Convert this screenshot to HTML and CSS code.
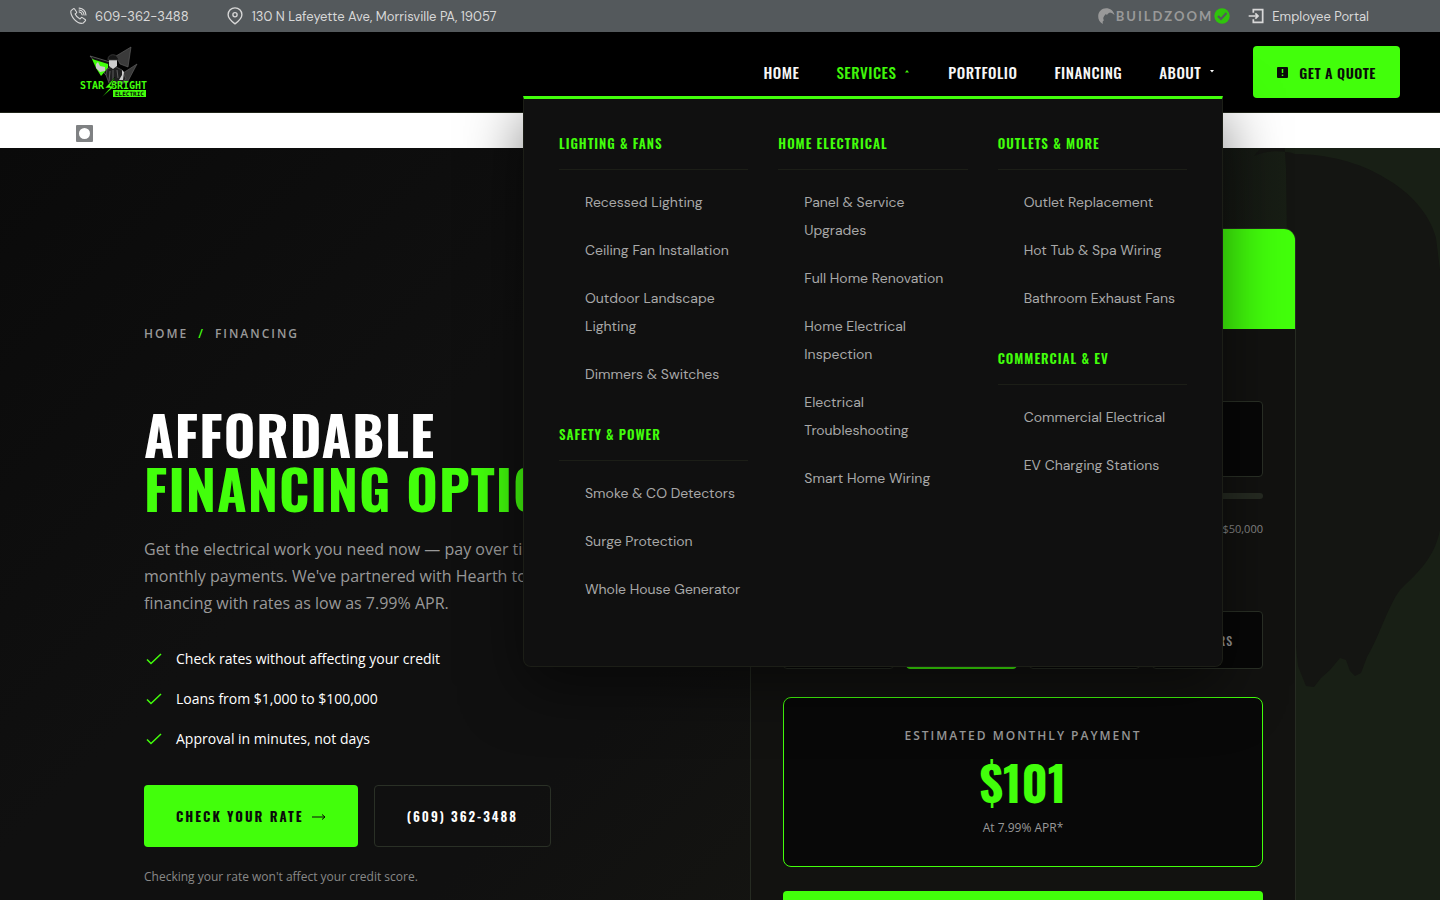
FILE: index.html
```
<!DOCTYPE html>
<html lang="en">
  <head>
    <meta charset="UTF-8" />
    <meta name="viewport" content="width=device-width, initial-scale=1.0" />
    <title>Financing | Star Bright Electric</title>
    <link rel="stylesheet" href="styles.css">
  </head>
  <body>
    <div class="topbar">
      <div class="topbar-group">
        <a class="topbar-link" href="tel:6093623488">
          <svg width="18" height="18" viewBox="0 0 24 24" fill="none" stroke="currentColor" stroke-width="1.5" stroke-linecap="round" stroke-linejoin="round"><path d="M5.5 2.5 2.800 4.800C1.500 8 4 13.500 7.300 16.800c3.300 3.300 8.500 5.800 11.900 4.500l2.500-2.700c.5-.7.4-1.400-.2-1.900l-3.700-2.500c-.6-.4-1.300-.3-1.800.3l-1.300 1.400c-2.400-1-5.500-4-6.500-6.500l1.500-1.300c.6-.5.6-1.200.2-1.800L7.400 2.700c-.5-.7-1.300-.8-1.900-.2z"/><path d="M13.500 6.500c2.200.4 3.700 1.900 4.100 4.100M13.500 4c3.600.4 6.200 3 6.600 6.600M13.500 1.500c5 .5 8.600 4.100 9.100 9.100"/></svg>
          <span>609-362-3488</span>
        </a>
        <a class="topbar-link" href="#map">
          <svg width="18" height="18" viewBox="0 0 24 24" fill="none" stroke="currentColor" stroke-width="1.800" stroke-linejoin="round"><path d="M12 22.500C8 19.500 2.800 15.300 2.800 10.300a9.200 9.200 0 0 1 18.400 0c0 5-5.200 9.200-9.200 12.200z"/><circle cx="12" cy="10.300" r="2.800"/></svg>
          <span>130 N Lafeyette Ave, Morrisville PA, 19057</span>
        </a>
      </div>
      <div class="topbar-group topbar-right">
        <a class="buildzoom" href="#buildzoom">
          <svg width="17" height="16" viewBox="0 0 18 16" preserveAspectRatio="none"><path fill="#999" d="M5 16C2 14.500 0 11.500.2 8 .5 3.500 4 .3 8.500.3c4.500 0 8 2.500 9 6.700l-2.500-1.800-2.300-.8-2 1-1.200 1.500-1.200-1L6.500 8l-1 2 .6 2.500L5 13.500z"/></svg>
          <span>BUILDZOOM</span>
          <svg width="16" height="16" viewBox="0 0 16 16"><circle cx="8" cy="8" r="7.700" fill="#2fc40b"/><path d="m4 8 3 3 5.500-6" fill="none" stroke="#54595c" stroke-width="2.200"/></svg>
        </a>
        <a class="topbar-link" href="#portal">
          <svg width="16" height="16" viewBox="0 0 24 24" fill="none" stroke="currentColor" stroke-width="2.600"><path d="M8 7V2.300h14v19.400H8V17M1 12h13.500M11 8l4 4-4 4"/></svg>
          <span>Employee Portal</span>
        </a>
      </div>
    </div>

    <header class="header">
      <a class="logo" href="#home" aria-label="Star Bright Electric">
        <svg width="68" height="52" viewBox="0 0 68 52">
          <path fill="#3a3a3a" stroke="#666" stroke-width=".6" d="M51 1 36 10l4 8 8 3zM57 18 43 27l-4 10h8z"/>
          <path fill="#101010" stroke="#666" stroke-width=".8" d="m10 10 20 6 4 18-8-5z"/>
          <path fill="#42ff0b" d="m12 13 16 5v4l-7 8-5-8z"/>
          <path fill="#202020" stroke="#555" stroke-width=".8" d="m27 23 7-3 8 4 4 9-5 4H29l-3-8z"/>
          <path fill="#ccc" d="M29 14h8v6l-4 3-4-3zM16 18l2-2 2 4 5 1v4l-5 1-4-4zM42 24l2 2-1 8h-4l3-5z"/>
          <path fill="#161616" stroke="#444" stroke-width=".7" d="M28 13c0-5 8-6 10-1l1 2H28z"/>
          <path fill="none" stroke="#777" stroke-width=".7" d="M33 24v10M30 25l-1 10M37 24l1 8"/>
          <text class="logo-name" x="0" y="43">STAR</text>
          <text class="logo-name" x="31" y="43">BRIGHT</text>
          <path fill="#42ff0b" stroke="#000" stroke-width=".5" d="M35 31 25 42h5l-8 9 13-11h-5z"/>
          <path fill="#42ff0b" d="M33 44h33v7H33z"/>
          <text class="logo-sub" x="35" y="50">ELECTRIC</text>
        </svg>
      </a>
      <nav class="nav">
        <a class="nav-link" href="#home">Home</a>
        <a class="nav-link active" href="#services">Services <svg width="8" height="4" viewBox="0 0 8 4"><path d="m4 0 2 2.500H2z" fill="currentColor"/></svg></a>
        <a class="nav-link" href="#portfolio">Portfolio</a>
        <a class="nav-link" href="#financing">Financing</a>
        <a class="nav-link" href="#about">About <svg width="8" height="4" viewBox="0 0 8 4"><path d="M2 0h4L4 2.500z" fill="currentColor"/></svg></a>
        <a class="quote-btn" href="#quote">
          <svg width="11" height="11" viewBox="0 0 11 11"><rect width="11" height="11" rx="1" fill="#0a0a0a"/><path d="M5.500 2v4M5.500 7.500V9" stroke="#42ff0b" stroke-width="1.500"/></svg>
          Get a Quote
        </a>
      </nav>
      <div class="mega-menu">
        <div class="mega-col">
          <h3>Lighting &amp; Fans</h3>
          <ul>
            <li><a href="#recessed">Recessed Lighting</a></li>
            <li><a href="#fans">Ceiling Fan Installation</a></li>
            <li><a href="#outdoor">Outdoor Landscape Lighting</a></li>
            <li><a href="#dimmers">Dimmers &amp; Switches</a></li>
          </ul>
          <h3>Safety &amp; Power</h3>
          <ul>
            <li><a href="#smoke">Smoke &amp; CO Detectors</a></li>
            <li><a href="#surge">Surge Protection</a></li>
            <li><a href="#generator">Whole House Generator</a></li>
          </ul>
        </div>
        <div class="mega-col">
          <h3>Home Electrical</h3>
          <ul>
            <li><a href="#panel">Panel &amp; Service Upgrades</a></li>
            <li><a href="#renovation">Full Home Renovation</a></li>
            <li><a href="#inspection">Home Electrical Inspection</a></li>
            <li><a href="#troubleshooting">Electrical Troubleshooting</a></li>
            <li><a href="#smart">Smart Home Wiring</a></li>
          </ul>
        </div>
        <div class="mega-col">
          <h3>Outlets &amp; More</h3>
          <ul>
            <li><a href="#outlet">Outlet Replacement</a></li>
            <li><a href="#hottub">Hot Tub &amp; Spa Wiring</a></li>
            <li><a href="#exhaust">Bathroom Exhaust Fans</a></li>
          </ul>
          <h3>Commercial &amp; EV</h3>
          <ul>
            <li><a href="#commercial">Commercial Electrical</a></li>
            <li><a href="#ev">EV Charging Stations</a></li>
          </ul>
        </div>
      </div>
    </header>

    <div class="strip">
      <svg width="17" height="17" viewBox="0 0 17 17"><rect width="17" height="17" rx="1" fill="#7f8183"/><circle cx="8.500" cy="8.500" r="5.500" fill="#fff"/></svg>
    </div>

    <main class="hero">
      <svg class="hero-shape" viewBox="0 0 200 550" preserveAspectRatio="none"><path d="M14 8C25 2 45 2 55 6c30 0 65 8 90 24 25 14 45 36 51 60l4 32v260c-6 30-25 45-40 60-12 16-20 45-33 67l-6 16-6 3-5-5-4-11-6-2-10 12-9 8-7 9-8-1-8-20-6-58-6-440-2-32 8-22z"/></svg>
      <div class="hero-grid">
        <div class="hero-text">
          <div class="breadcrumb"><a href="#home">Home</a><span class="slash">/</span><span>Financing</span></div>
          <h1>Affordable <span>Financing Options</span></h1>
          <p class="lead">Get the electrical work you need now — pay over time with affordable monthly payments. We've partnered with Hearth to offer flexible financing with rates as low as 7.99% APR.</p>
          <ul class="checks">
            <li><svg width="20" height="20" viewBox="0 0 20 20"><path d="m3 10.500 4 4L17 5"/></svg>Check rates without affecting your credit</li>
            <li><svg width="20" height="20" viewBox="0 0 20 20"><path d="m3 10.500 4 4L17 5"/></svg>Loans from $1,000 to $100,000</li>
            <li><svg width="20" height="20" viewBox="0 0 20 20"><path d="m3 10.500 4 4L17 5"/></svg>Approval in minutes, not days</li>
          </ul>
          <div class="actions">
            <a class="btn btn-primary" href="#rate">Check Your Rate <svg width="14" height="8" viewBox="0 0 14 8"><path d="M0 5h12.500M10 2.500 13 5l-3 2.500" fill="none" stroke="#0a0a0a"/></svg></a>
            <a class="btn btn-outline" href="tel:6093623488">(609) 362-3488</a>
          </div>
          <p class="note">Checking your rate won't affect your credit score.</p>
        </div>
        <form class="calc">
          <div class="calc-head"></div>
          <div class="calc-body">
            <input class="amount" type="text" value="$5,000" aria-label="Loan amount" />
            <input class="range" type="range" min="1000" max="50000" value="5000" aria-label="Loan amount slider" />
            <div class="range-ends"><span>$50,000</span></div>
            <div class="terms">
              <button type="button" aria-label="3 years"></button>
              <button type="button" class="active" aria-label="5 years"></button>
              <button type="button" aria-label="7 years"></button>
              <button type="button">12 Years</button>
            </div>
            <div class="result">
              <div class="result-label">Estimated Monthly Payment</div>
              <div class="result-value">$101</div>
              <div class="result-apr">At 7.99% APR*</div>
            </div>
            <button class="submit" type="submit" aria-label="Check your rate"></button>
          </div>
        </form>
      </div>
    </main>
  </body>
</html>
```

FILE: styles.css
```
* {
  box-sizing: border-box;
}
body {
  margin: 0;
  min-height: 100vh;
  background: #0a0a0a;
  color: #fff;
  font-family: "Open Sans", sans-serif;
}
a {
  color: inherit;
  text-decoration: none;
}
ul {
  list-style: none;
  margin: 0;
  padding: 0;
}
h1, h3, p {
  margin: 0;
}

/* top bar */
.topbar {
  height: 32px;
  padding: 0 71px 0 69px;
  display: flex;
  align-items: center;
  justify-content: space-between;
  background: #54595c;
  color: #d8d8d8;
  font-family: "DM Sans", Inter, sans-serif;
  font-size: 13px;
}
.topbar-group {
  display: flex;
  align-items: center;
  gap: 37px;
}
.topbar-right {
  gap: 18px;
}
.topbar-link {
  display: flex;
  align-items: center;
  gap: 8px;
}
.buildzoom {
  display: flex;
  align-items: center;
  gap: 1px;
  color: #999;
  font-family: Lato, sans-serif;
  font-weight: 700;
  font-size: 13px;
  letter-spacing: 2px;
}

/* header */
.header {
  position: relative;
  z-index: 10;
  height: 81px;
  padding: 0 40px 0 80px;
  display: flex;
  align-items: center;
  justify-content: space-between;
  background: #000;
  border-bottom: 1px solid #1f2419;
}
.logo svg {
  display: block;
}
.logo-name {
  fill: #42ff0b;
  font: 700 10px "DejaVu Sans Mono", monospace;
}
.logo-sub {
  fill: #0a0a0a;
  font: 700 6px "DejaVu Sans Mono", monospace;
}
.nav {
  display: flex;
  align-items: center;
  gap: 37px;
  font-family: Oswald, sans-serif;
  font-weight: 500;
  font-size: 15px;
  letter-spacing: 0.5px;
  text-transform: uppercase;
}
.nav-link {
  display: flex;
  align-items: center;
  gap: 7px;
}
.nav-link.active {
  color: #42ff0b;
}
.quote-btn {
  height: 52px;
  padding: 0 24px;
  display: flex;
  align-items: center;
  gap: 11px;
  border-radius: 4px;
  background: #42ff0b;
  color: #0a0a0a;
  font-weight: 600;
  font-size: 14px;
}

/* services menu */
.mega-menu {
  position: absolute;
  top: 64px;
  right: 217px;
  width: 700px;
  padding: 35px 35px 26px;
  display: grid;
  grid-template-columns: repeat(3, 1fr);
  gap: 30px;
  background: #101010;
  border: 1px solid #1c1e17;
  border-top: 3px solid #42ff0b;
  border-radius: 0 0 8px 8px;
  box-shadow: 0 20px 60px rgba(0, 0, 0, 0.5);
}
.mega-col h3 {
  padding-bottom: 17px;
  margin-bottom: 8px;
  border-bottom: 1px solid #1c1e17;
  color: #42ff0b;
  font-family: Oswald, sans-serif;
  font-weight: 600;
  font-size: 13px;
  line-height: 18px;
  letter-spacing: 1px;
  text-transform: uppercase;
}
.mega-col ul {
  margin-bottom: 27px;
}
.mega-col li {
  padding: 10px 0 10px 26px;
  color: #a8a8a8;
  font-family: "DM Sans", Inter, sans-serif;
  font-size: 14px;
  line-height: 28px;
}

.strip {
  height: 35px;
  padding: 12px 76px;
  background: #fff;
}
.strip svg {
  display: block;
}

/* hero */
.hero {
  position: relative;
  padding: 80px 10%;
  background:
    linear-gradient(90deg, transparent 82%, #181f15 90%),
    linear-gradient(135deg, #0a0a0a 0%, #101010 30%, #101010 50%, #141411 65%);
}
.hero-shape {
  position: absolute;
  top: 0;
  right: 0;
  width: 200px;
  height: 550px;
  fill: #141512;
}
.hero-grid {
  position: relative;
  display: grid;
  grid-template-columns: 1fr 1fr;
  gap: 60px;
}
.hero-text {
  padding-top: 96px;
}
.breadcrumb {
  display: flex;
  gap: 10px;
  margin-bottom: 63px;
  color: #999;
  font-size: 12px;
  font-weight: 600;
  line-height: 20px;
  letter-spacing: 2px;
  text-transform: uppercase;
}
.slash {
  color: #42ff0b;
}
h1 {
  margin-bottom: 21px;
  font-family: Oswald, sans-serif;
  font-weight: 700;
  font-size: 54px;
  line-height: 54px;
  letter-spacing: 1px;
  text-transform: uppercase;
  white-space: nowrap;
}
h1 span {
  display: block;
  color: #42ff0b;
}
.lead {
  margin-bottom: 32px;
  color: #999;
  font-size: 16px;
  line-height: 27px;
}
.checks {
  display: grid;
  gap: 20px;
  margin-bottom: 36px;
}
.checks li {
  display: flex;
  align-items: center;
  gap: 12px;
  font-size: 14px;
  line-height: 20px;
}
.checks path {
  fill: none;
  stroke: #42ff0b;
  stroke-width: 1.5;
}
.actions {
  display: flex;
  gap: 16px;
  margin-bottom: 20px;
}
.btn {
  height: 62px;
  padding: 0 32px;
  display: flex;
  align-items: center;
  gap: 8px;
  border-radius: 4px;
  font-family: Oswald, sans-serif;
  font-weight: 600;
  font-size: 13px;
  letter-spacing: 2px;
  text-transform: uppercase;
}
.btn-primary {
  background: #42ff0b;
  color: #0a0a0a;
  font-weight: 700;
}
.btn-outline {
  border: 1px solid #2a3026;
}
.note {
  color: #888;
  font-size: 12px;
  line-height: 20px;
}

/* payment calculator */
.calc {
  overflow: hidden;
  border: 1px solid #262b22;
  border-radius: 12px;
  background: #121210;
}
.calc-head {
  height: 100px;
  background: #42ff0b;
}
.calc-body {
  padding: 72px 32px 32px;
}
.amount {
  display: block;
  width: 100%;
  height: 76px;
  margin-bottom: 16px;
  padding: 0 24px;
  border: 1px solid #2a3026;
  border-radius: 4px;
  background: #070707;
  color: #42ff0b;
  font: 700 24px Oswald, sans-serif;
}
.range {
  display: block;
  width: 100%;
  height: 6px;
  margin: 0 0 20px;
  border-radius: 3px;
  background: #262b22;
  appearance: none;
}
.range-ends {
  display: flex;
  justify-content: flex-end;
  margin-bottom: 72px;
  color: #888;
  font-size: 11px;
  line-height: 20px;
}
.terms {
  display: grid;
  grid-template-columns: repeat(4, 1fr);
  gap: 12px;
  margin-bottom: 28px;
}
.terms button {
  height: 58px;
  border: 1px solid #2a3026;
  border-radius: 4px;
  background: #070707;
  color: #999;
  font: 500 12px Oswald, sans-serif;
  letter-spacing: 1px;
  text-transform: uppercase;
}
.terms .active {
  border-color: #42ff0b;
  background: #42ff0b;
}
.result {
  height: 170px;
  margin-bottom: 24px;
  padding-top: 28px;
  border: 1px solid #42ff0b;
  border-radius: 8px;
  background: #080808;
  color: #999;
  text-align: center;
}
.result-label {
  font-size: 12px;
  font-weight: 600;
  line-height: 20px;
  letter-spacing: 2px;
  text-transform: uppercase;
}
.result-value {
  color: #42ff0b;
  font: 700 48px/72px Oswald, sans-serif;
}
.result-apr {
  font-size: 12px;
  line-height: 20px;
}
.submit {
  display: block;
  width: 100%;
  height: 58px;
  border: 0;
  border-radius: 4px;
  background: #42ff0b;
}
```
